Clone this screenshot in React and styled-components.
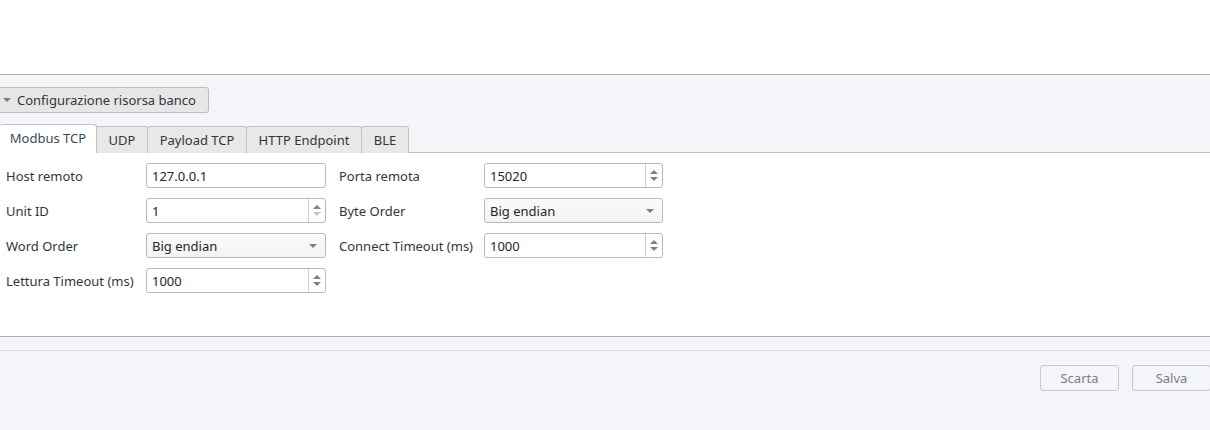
import React from "react";
import styled, { createGlobalStyle } from "styled-components";

const Global = createGlobalStyle`
  html, body { margin: 0; padding: 0; background: #ffffff; }
  body {
    font-family: "Noto Sans", "Open Sans", sans-serif;
    font-size: 13px;
    color: #31363b;
    overflow: hidden;
  }
  * { box-sizing: border-box; }
`;

const Window = styled.div`
  width: 1210px;
  height: 430px;
  display: flex;
  flex-direction: column;
`;

const TopArea = styled.div`
  height: 75px;
  background: #ffffff;
  border-bottom: 1px solid #b3b3b3;
  flex: none;
`;

const Body = styled.div`
  flex: 1;
  background: #f4f5f8;
  display: flex;
  flex-direction: column;
`;

const ToggleButton = styled.button`
  margin: 12px 0 0 -4px;
  width: 213px;
  height: 26px;
  display: flex;
  align-items: center;
  gap: 6px;
  padding: 0 0 1px 2px;
  background: #e6e6e6;
  border: 1px solid #bcbcbc;
  border-radius: 3px;
  font-family: inherit;
  font-size: 13px;
  color: #31363b;
  align-self: flex-start;
`;

const Caret = styled.span`
  width: 0;
  height: 0;
  border-left: 4px solid transparent;
  border-right: 4px solid transparent;
  border-top: 4px solid #7a7a7a;
  margin-left: 4px;
`;

const TabBar = styled.div`
  margin-top: 11px;
  display: flex;
  align-items: flex-end;
  height: 29px;
  position: relative;
  z-index: 1;
`;

const Tab = styled.div`
  width: ${(p) => p.$w}px;
  height: ${(p) => (p.$active ? "29px" : "27px")};
  display: flex;
  align-items: center;
  justify-content: center;
  padding-bottom: ${(p) => (p.$active ? "1px" : "0")};
  background: ${(p) => (p.$active ? "#ffffff" : "#e8e8e8")};
  border: 1px solid #c2c2c2;
  border-bottom: ${(p) => (p.$active ? "1px solid #ffffff" : "none")};
  border-left: ${(p) => (p.$first ? "none" : "1px solid #c2c2c2")};
  margin-left: ${(p) => (p.$first ? "0" : "-1px")};
  border-radius: 3px 3px 0 0;
  color: ${(p) => (p.$active ? "#3b4a5c" : "#31363b")};
  white-space: nowrap;
`;

const Panel = styled.div`
  background: #ffffff;
  border-top: 1px solid #c2c2c2;
  border-bottom: 1px solid #b0b0b0;
  margin-top: -1px;
  height: 185px;
  padding: 10px 0 0 6px;
`;

const FormGrid = styled.div`
  display: grid;
  grid-template-columns: 140px 180px 158px 179px;
  row-gap: 10px;
  grid-auto-rows: 25px;
  align-items: center;
`;

const Label = styled.div`
  padding-left: ${(p) => (p.$right ? "13px" : "0")};
  padding-top: 1px;
  white-space: nowrap;
  line-height: 24px;
`;

const Field = styled.div`
  height: 25px;
  border: 1px solid #b9b9b9;
  border-radius: 3px;
  background: #ffffff;
  display: flex;
  align-items: stretch;
  overflow: hidden;
`;

const FieldText = styled.div`
  flex: 1;
  padding: 1px 5px 0;
  display: flex;
  align-items: center;
  color: #232629;
`;

const ComboField = styled(Field)`
  background: linear-gradient(#fbfbfb, #f3f3f3);
`;

const SpinButtons = styled.div`
  width: 17px;
  border-left: 1px solid #cfcfcf;
  display: flex;
  flex-direction: column;
  align-items: center;
  justify-content: center;
  gap: 3px;
`;

const Arrow = styled.span`
  width: 0;
  height: 0;
  border-left: 4px solid transparent;
  border-right: 4px solid transparent;
  ${(p) =>
    p.$up
      ? `border-bottom: 4px solid ${p.$dim ? "#c4c4c4" : "#808080"};`
      : `border-top: 4px solid ${p.$dim ? "#c4c4c4" : "#808080"};`}
`;

const ComboArrow = styled.span`
  width: 0;
  height: 0;
  align-self: center;
  margin-right: 8px;
  border-left: 4px solid transparent;
  border-right: 4px solid transparent;
  border-top: 4px solid #808080;
`;

const Spacer = styled.div``;

const Divider = styled.div`
  margin-top: 13px;
  border-top: 1px solid #dcdde0;
`;

const Footer = styled.div`
  display: flex;
  justify-content: flex-end;
  gap: 13px;
  padding: 14px 0 0;
  margin-right: -1px;
`;

const FooterButton = styled.button`
  width: 79px;
  height: 26px;
  background: #f4f5f8;
  border: 1px solid #c8c8c8;
  border-radius: 3px;
  font-family: inherit;
  font-size: 13px;
  color: #7b7e82;
  padding: 0 0 1px;
`;

function TextInput({ value }) {
  return (
    <Field>
      <FieldText>{value}</FieldText>
    </Field>
  );
}

function SpinBox({ value, atMin }) {
  return (
    <Field>
      <FieldText>{value}</FieldText>
      <SpinButtons>
        <Arrow $up />
        <Arrow $dim={atMin} />
      </SpinButtons>
    </Field>
  );
}

function Combo({ value }) {
  return (
    <ComboField>
      <FieldText>{value}</FieldText>
      <ComboArrow />
    </ComboField>
  );
}

const tabs = [
  { name: "Modbus TCP", w: 97 },
  { name: "UDP", w: 52 },
  { name: "Payload TCP", w: 100 },
  { name: "HTTP Endpoint", w: 116 },
  { name: "BLE", w: 48 },
];

export default function App() {
  return (
    <>
      <Global />
      <Window>
        <TopArea />
        <Body>
          <ToggleButton>
            <Caret />
            Configurazione risorsa banco
          </ToggleButton>
          <TabBar>
            {tabs.map((t, i) => (
              <Tab key={t.name} $active={i === 0} $first={i === 0} $w={t.w}>
                {t.name}
              </Tab>
            ))}
          </TabBar>
          <Panel>
            <FormGrid>
              <Label>Host remoto</Label>
              <TextInput value="127.0.0.1" />
              <Label $right>Porta remota</Label>
              <SpinBox value="15020" />

              <Label>Unit ID</Label>
              <SpinBox value="1" atMin />
              <Label $right>Byte Order</Label>
              <Combo value="Big endian" />

              <Label>Word Order</Label>
              <Combo value="Big endian" />
              <Label $right>Connect Timeout (ms)</Label>
              <SpinBox value="1000" />

              <Label>Lettura Timeout (ms)</Label>
              <SpinBox value="1000" />
              <Spacer />
              <Spacer />
            </FormGrid>
          </Panel>
          <Divider />
          <Footer>
            <FooterButton>Scarta</FooterButton>
            <FooterButton>Salva</FooterButton>
          </Footer>
        </Body>
      </Window>
    </>
  );
}
